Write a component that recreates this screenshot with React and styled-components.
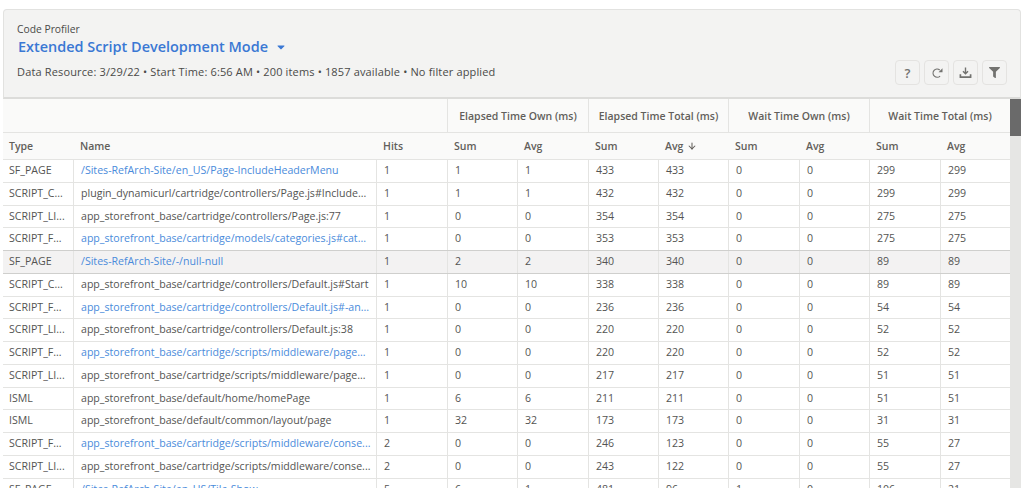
import React from 'react'
import styled, { createGlobalStyle } from 'styled-components'
import { FaCaretDown, FaFilter } from 'react-icons/fa'
import { FiArrowDown } from 'react-icons/fi'

const GlobalStyle = createGlobalStyle`
	html, body {
		margin: 0;
		height: 100%;
		overflow: hidden;
		background: #fff;
	}
	body {
		font-family: "Open Sans", "Liberation Sans", sans-serif;
		color: #3e3e3c;
	}
`

const COLUMNS = '70px 303px 71px 70px 71px 70px 70px 71px 70px 71px 70px'

const Page = styled.div`
	padding: 9px 3px 0;
	height: 488px;
	box-sizing: border-box;
	overflow: hidden;
`

const Header = styled.header`
	height: 90px;
	box-sizing: border-box;
	background: #f3f3f2;
	border: 1px solid #e2e2e0;
	border-bottom: 2px solid #dcdcda;
	border-radius: 4px 4px 0 0;
	padding: 12px 13px 0 13px;
	display: flex;
	justify-content: space-between;
`

const Titles = styled.div`
	display: flex;
	flex-direction: column;
`

const Eyebrow = styled.div`
	font-size: 10.3px;
	line-height: 14px;
	color: #4a4a48;
`

const TitleRow = styled.div`
	display: flex;
	align-items: center;
	gap: 7px;
	margin-top: 1px;
	margin-left: 1px;
	color: #3a78d4;
`

const Title = styled.h1`
	margin: 0;
	font-size: 14.45px;
	line-height: 20px;
	font-weight: 600;
`

const Meta = styled.div`
	margin-top: 8px;
	font-size: 11px;
	letter-spacing: 0.15px;
	line-height: 14px;
	color: #4a4a48;
`

const Tools = styled.div`
	display: flex;
	gap: 4px;
	align-self: flex-start;
	margin-top: 38px;
`

const ToolButton = styled.button`
	width: 25px;
	height: 25px;
	padding: 0;
	display: flex;
	align-items: center;
	justify-content: center;
	background: #f3f3f2;
	border: 1px solid #e4e3e1;
	border-radius: 4px;
	color: #72726f;
	font-family: inherit;
	font-size: 13px;
	font-weight: 600;
`

const TableWrap = styled.div`
	display: flex;
`

const Table = styled.div`
	flex: 1;
	min-width: 0;
`

const Row = styled.div`
	display: grid;
	grid-template-columns: ${COLUMNS};
	height: ${p => p.$h || 22.75}px;
	box-sizing: border-box;
	background: ${p => (p.$active ? '#f3f2f2' : '#fff')};
	border-bottom: 1px solid #e4e4e2;
	${p => p.$active && 'border-top: 1px solid #cfcfcd; border-bottom-color: #cfcfcd; margin-top: -1px; height: 23.75px;'}
`

const GroupRow = styled(Row)`
	background: #fafaf9;
`

const ColumnRow = styled(Row)`
	background: #fafaf9;
`

const GroupCell = styled.div`
	grid-column: span ${p => p.$span};
	display: flex;
	align-items: center;
	justify-content: center;
	font-size: 10.5px;
	font-weight: 600;
	color: #625f5b;
	${p => p.$divided && 'border-left: 1px solid #e4e4e2;'}
`

const ColumnCell = styled.div`
	display: flex;
	align-items: center;
	gap: 4px;
	padding-left: ${p => (p.$first ? 6 : 7)}px;
	font-size: 10.5px;
	font-weight: 600;
	color: #625f5b;
`

const Cell = styled.div`
	display: block;
	padding-left: ${p => (p.$first ? 6 : 7)}px;
	padding-right: 4px;
	font-size: 10.6px;
	line-height: 21px;
	white-space: nowrap;
	overflow: hidden;
	text-overflow: ellipsis;
	color: ${p => (p.$link ? '#4a8bdb' : '#545452')};
	${p => !p.$first && 'border-left: 1px solid #e4e4e2;'}
`

const ScrollTrack = styled.div`
	width: 11px;
	flex-shrink: 0;
	height: 389px;
	background: #e6e6e4;
`

const ScrollThumb = styled.div`
	height: 37px;
	background: #6a6a6a;
`

const columnLabels = ['Type', 'Name', 'Hits', 'Sum', 'Avg', 'Sum', 'Avg', 'Sum', 'Avg', 'Sum', 'Avg']

const rows = [
	{ link: true, cells: ['SF_PAGE', '/Sites-RefArch-Site/en_US/Page-IncludeHeaderMenu', 1, 1, 1, 433, 433, 0, 0, 299, 299] },
	{ cells: ['SCRIPT_C...', 'plugin_dynamicurl/cartridge/controllers/Page.js#Include...', 1, 1, 1, 432, 432, 0, 0, 299, 299] },
	{ cells: ['SCRIPT_LI...', 'app_storefront_base/cartridge/controllers/Page.js:77', 1, 0, 0, 354, 354, 0, 0, 275, 275] },
	{ link: true, cells: ['SCRIPT_F...', 'app_storefront_base/cartridge/models/categories.js#cat...', 1, 0, 0, 353, 353, 0, 0, 275, 275] },
	{ link: true, active: true, cells: ['SF_PAGE', '/Sites-RefArch-Site/-/null-null', 1, 2, 2, 340, 340, 0, 0, 89, 89] },
	{ cells: ['SCRIPT_C...', 'app_storefront_base/cartridge/controllers/Default.js#Start', 1, 10, 10, 338, 338, 0, 0, 89, 89] },
	{ link: true, cells: ['SCRIPT_F...', 'app_storefront_base/cartridge/controllers/Default.js#-an...', 1, 0, 0, 236, 236, 0, 0, 54, 54] },
	{ cells: ['SCRIPT_LI...', 'app_storefront_base/cartridge/controllers/Default.js:38', 1, 0, 0, 220, 220, 0, 0, 52, 52] },
	{ link: true, cells: ['SCRIPT_F...', 'app_storefront_base/cartridge/scripts/middleware/page...', 1, 0, 0, 220, 220, 0, 0, 52, 52] },
	{ cells: ['SCRIPT_LI...', 'app_storefront_base/cartridge/scripts/middleware/page...', 1, 0, 0, 217, 217, 0, 0, 51, 51] },
	{ cells: ['ISML', 'app_storefront_base/default/home/homePage', 1, 6, 6, 211, 211, 0, 0, 51, 51] },
	{ cells: ['ISML', 'app_storefront_base/default/common/layout/page', 1, 32, 32, 173, 173, 0, 0, 31, 31] },
	{ link: true, cells: ['SCRIPT_F...', 'app_storefront_base/cartridge/scripts/middleware/conse...', 2, 0, 0, 246, 123, 0, 0, 55, 27] },
	{ cells: ['SCRIPT_LI...', 'app_storefront_base/cartridge/scripts/middleware/conse...', 2, 0, 0, 243, 122, 0, 0, 55, 27] },
	{ link: true, cells: ['SF_PAGE', '/Sites-RefArch-Site/en_US/Tile-Show', 5, 6, 1, 481, 96, 1, 0, 106, 21] },
]

function App() {
	return (
		<>
			<GlobalStyle />
			<Page>
				<Header>
					<Titles>
						<Eyebrow>Code Profiler</Eyebrow>
						<TitleRow>
							<Title>Extended Script Development Mode</Title>
							<FaCaretDown size={12} />
						</TitleRow>
						<Meta>Data Resource: 3/29/22 • Start Time: 6:56 AM • 200 items • 1857 available • No filter applied</Meta>
					</Titles>
					<Tools>
						<ToolButton>?</ToolButton>
						<ToolButton>
							<svg width="12" height="12" viewBox="0 0 14 14" fill="none" stroke="currentColor" strokeWidth="1.4">
								<path d="M10.2 3.4A4.8 4.8 0 1 0 10.6 10.6" />
								<path d="M13.4 1.6v4.6H8.8z" fill="currentColor" stroke="none" />
							</svg>
						</ToolButton>
						<ToolButton>
							<svg width="13" height="13" viewBox="0 0 14 14" fill="none" stroke="currentColor" strokeWidth="1.5">
								<path d="M7 1.5v6.5M4.3 5.6 7 8.4l2.7-2.8" />
								<path d="M1.5 9v3h11V9" strokeWidth="1.8" />
							</svg>
						</ToolButton>
						<ToolButton><FaFilter size={11} /></ToolButton>
					</Tools>
				</Header>
				<TableWrap>
					<Table>
						<GroupRow $h={34}>
							<GroupCell $span={3} />
							<GroupCell $span={2} $divided>Elapsed Time Own (ms)</GroupCell>
							<GroupCell $span={2} $divided>Elapsed Time Total (ms)</GroupCell>
							<GroupCell $span={2} $divided>Wait Time Own (ms)</GroupCell>
							<GroupCell $span={2} $divided>Wait Time Total (ms)</GroupCell>
						</GroupRow>
						<ColumnRow $h={27}>
							{columnLabels.map((label, i) => (
								<ColumnCell key={i} $first={i === 0}>
									{label}
									{i === 6 && <FiArrowDown size={10} strokeWidth={2.5} />}
								</ColumnCell>
							))}
						</ColumnRow>
						{rows.map((row, i) => (
							<Row key={i} $active={row.active}>
								{row.cells.map((value, j) => (
									<Cell key={j} $first={j === 0} $link={j === 1 && row.link}>{value}</Cell>
								))}
							</Row>
						))}
					</Table>
					<ScrollTrack>
						<ScrollThumb />
					</ScrollTrack>
				</TableWrap>
			</Page>
		</>
	)
}

export default App
